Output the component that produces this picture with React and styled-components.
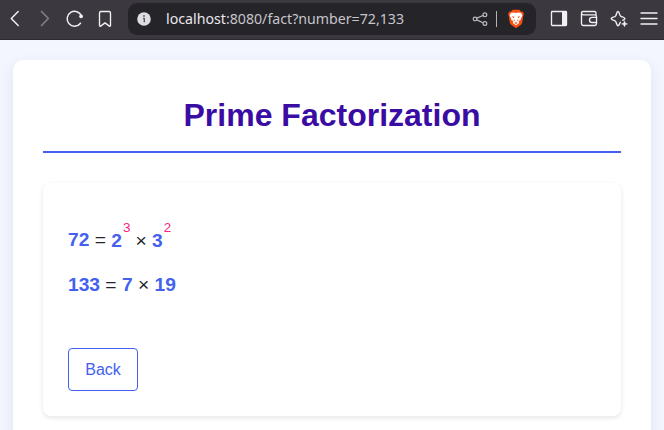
import React from "react";
import styled, { createGlobalStyle } from "styled-components";

const GlobalStyle = createGlobalStyle`
  * { box-sizing: border-box; }
  html, body { margin: 0; }
  body {
    background: #f3f6ff;
    color: #212529;
    font-family: "Liberation Sans", Arial, sans-serif;
    font-size: 16px;
    overflow: hidden;
  }
`;

const Window = styled.div`
  height: 430px;
  overflow: hidden;
  display: flex;
  flex-direction: column;
`;

const Toolbar = styled.header`
  display: flex;
  align-items: center;
  flex: 0 0 40px;
  background: #3b393f;
  border-bottom: 1px solid #2c2b30;
  padding: 0 5px 1px 5px;
`;

const NavGroup = styled.nav`
  display: flex;
  width: 123px;
  gap: 10px;
`;

const MenuGroup = styled.div`
  display: flex;
  gap: 10px;
  margin-left: 13px;
`;

const IconButton = styled.button`
  display: flex;
  width: 20px;
  height: 20px;
  padding: 0;
  border: 0;
  background: none;
  color: ${(p) => (p.$dim ? "#858387" : "#f1f0f2")};
`;

const Icon = styled.svg`
  display: block;
  flex: none;
  width: 20px;
  height: 20px;
  fill: none;
  stroke: currentColor;
  stroke-width: 1.35;
  stroke-linecap: round;
  stroke-linejoin: round;
`;

const AddressBar = styled.div`
  display: flex;
  align-items: center;
  flex: none;
  width: 408px;
  height: 32px;
  border-radius: 9px;
  background: #252429;
  color: #bcbabf;
  padding: 0 10px 0 6px;
`;

const Url = styled.span`
  flex: 1;
  margin-left: 12px;
  font: 14.18px/20px "Noto Sans", sans-serif;
  white-space: nowrap;
  color: #c7c6ca;
`;

const Host = styled.span`
  color: #e9e8ec;
`;

const Divider = styled.span`
  width: 1px;
  height: 16px;
  margin: 0 9px 0 6px;
  background: #b2b0b5;
`;

const Page = styled.main`
  flex: 1;
  padding: 20px 13px 0;
  min-height: 0;
`;

const Container = styled.section`
  height: 500px;
  padding: 30px;
  border-radius: 10px;
  background: #fff;
  box-shadow: 0 5px 15px rgba(0, 0, 0, 0.08);
`;

const Title = styled.h1`
  height: 63px;
  margin: 0 0 30px;
  padding-top: 6px;
  border-bottom: 2px solid #4361ee;
  color: #3a0ca3;
  font-size: 32px;
  line-height: 38px;
  text-align: center;
`;

const Result = styled.article`
  display: flex;
  flex-direction: column;
  height: 233px;
  padding: 25px;
  border-radius: 8px;
  background: #fff;
  box-shadow: 0 2px 5px rgba(0, 0, 0, 0.1);
`;

const Equations = styled.div`
  display: flex;
  flex-direction: column;
  gap: 14px;
  padding-top: 16px;
  height: 140px;
`;

const Equation = styled.div`
  height: 31px;
  font-size: 19.2px;
  line-height: 31px;
  white-space: pre;
`;

const Term = styled.strong`
  display: inline-block;
  position: relative;
  top: ${(p) => (p.$lowered ? "1px" : "0")};
  color: #4361ee;
`;

const Times = styled.span`
  display: inline-block;
  position: relative;
  top: ${(p) => (p.$afterPower ? "1px" : "0")};
  margin-left: ${(p) => (p.$afterPower ? "-0.3px" : "0")};
`;

const Power = styled.sup`
  display: inline-block;
  position: relative;
  top: -15px;
  margin-left: 1px;
  vertical-align: baseline;
  line-height: 0;
  font-size: 13.4px;
  font-weight: 400;
  color: #f72585;
`;

const BackButton = styled.button`
  width: 70px;
  height: 43px;
  padding: 0;
  border: 1px solid #4361ee;
  border-radius: 4px;
  background: #fff;
  color: #4361ee;
  font: 16px "Liberation Sans", Arial, sans-serif;
`;

function BrowserToolbar() {
  return (
    <Toolbar>
      <NavGroup>
        <IconButton aria-label="Previous page">
          <Icon viewBox="0 0 20 20"><path d="M13.2 2.5 6.3 9.5l6.9 7" strokeWidth="1.5" /></Icon>
        </IconButton>
        <IconButton $dim aria-label="Next page">
          <Icon viewBox="0 0 20 20"><path d="m6.5 2.5 6.9 7-6.9 7" strokeWidth="1.5" /></Icon>
        </IconButton>
        <IconButton aria-label="Reload">
          <Icon viewBox="0 0 20 20">
            <path d="M16.5 7.2A7.4 7.4 0 1 0 15.5 14.2" strokeWidth="1.5" />
            <circle cx="16.1" cy="7.3" r="1.9" fill="currentColor" stroke="none" />
          </Icon>
        </IconButton>
        <IconButton aria-label="Bookmark">
          <Icon viewBox="0 0 20 20"><path d="M4.5 4.2c0-1 .6-1.7 1.6-1.7h7.8c1 0 1.6.7 1.6 1.7v12.3c0 .7-.7 1-1.2.6L10 13.9l-4.3 3.2c-.5.4-1.2.1-1.2-.6Z" /></Icon>
        </IconButton>
      </NavGroup>
      <AddressBar>
        <Icon viewBox="0 0 20 20">
          <circle cx="10" cy="10" r="6.8" fill="#dedde1" stroke="none" />
          <path d="M9 9.3h1.3v4" stroke="#57555b" strokeLinecap="butt" />
          <circle cx="10" cy="6.9" r=".9" fill="#57555b" stroke="none" />
        </Icon>
        <Url><Host>localhost</Host>:8080/fact?number=72,133</Url>
        <Icon viewBox="0 0 20 20">
          <g strokeWidth="1.2">
            <circle cx="5" cy="10" r="1.8" />
            <circle cx="14.9" cy="5.7" r="1.9" />
            <circle cx="14.9" cy="14.5" r="1.9" />
            <path d="m6.8 9.1 6.2-2.6M6.8 10.9l6.2 2.8" />
          </g>
        </Icon>
        <Divider />
        <Icon viewBox="0 0 20 20">
          <path d="m6.8.8-1.5 1.5-2.4.6-.8 2.5.6 1.2 1 6.3c.3 1.5 1 2.5 2.1 3.3L10 19.3l4.2-3.1c1.1-.8 1.8-1.8 2.1-3.3l1-6.3.6-1.2-.8-2.5-2.4-.6L13.2.8Z" fill="#fb4f12" stroke="none" />
          <path d="m7.3 3.5-2.5.4-1.2 2.7 1.6 2.8-.1 1.4 2.2 1.2-.5 1.9 3.2 2.4 3.2-2.4-.5-1.9 2.2-1.2-.1-1.4 1.6-2.8-1.2-2.7-2.5-.4-2.7.6Z" fill="#fff" stroke="none" />
          <path d="m5.6 7.2 2.9.6-.7 1.4Zm8.8 0-2.9.6.7 1.4ZM8 10.3l-.5 1 1.8.9Zm4 0 .5 1-1.8.9ZM8.4 13.9l1.6-.8 1.6.8-1.6 1.1Z" fill="#fb4f12" stroke="none" />
        </Icon>
      </AddressBar>
      <MenuGroup>
        <IconButton aria-label="Sidebar">
          <Icon viewBox="0 0 20 20">
            <rect x="2.5" y="2.5" width="15" height="14" rx=".8" />
            <path d="M13 3h4.5v13H13Z" fill="currentColor" stroke="none" />
          </Icon>
        </IconButton>
        <IconButton aria-label="Wallet">
          <Icon viewBox="0 0 20 20">
            <path d="M17 6V4.2c0-1-.6-1.7-1.6-1.7H4.2c-1 0-1.7.7-1.7 1.6s.7 1.7 1.7 1.7h11.6c1 0 1.7.7 1.7 1.7v7.3c0 1-.7 1.7-1.7 1.7H4.2c-1 0-1.7-.7-1.7-1.7V4.1" />
            <path d="M17.5 8.3h-4.3c-1.6 0-2.7 1.1-2.7 2.6s1.1 2.6 2.7 2.6h4.3" />
          </Icon>
        </IconButton>
        <IconButton aria-label="Assistant">
          <Icon viewBox="0 0 20 20">
            <path d="M11.4 13.2c-1 1.5-1.3 3.5-2.4 3.5-1.5 0-1.3-3.2-2.5-4.5S2.2 11 2.2 9.6s3.1-1.2 4.3-2.5S7.5 2.5 9 2.5s1.2 3.3 2.5 4.6 4.4 1.1 4.4 2.5c0 .9-1 1.2-2.2 1.7" />
            <path d="m15.5 12 .8 2.1 2.1.8-2.1.8-.8 2.1-.8-2.1-2.1-.8 2.1-.8Z" fill="currentColor" strokeWidth=".5" />
          </Icon>
        </IconButton>
        <IconButton aria-label="Menu">
          <Icon viewBox="0 0 20 20"><path d="M2 4h16M2 9.5h16M2 15h16" /></Icon>
        </IconButton>
      </MenuGroup>
    </Toolbar>
  );
}

export default function App() {
  return (
    <>
      <GlobalStyle />
      <Window>
        <BrowserToolbar />
        <Page>
          <Container>
            <Title>Prime Factorization</Title>
            <Result>
              <Equations>
                <Equation>
                  <Term>72</Term> = <Term $lowered>2<Power>3</Power></Term> <Times $afterPower>×</Times> <Term $lowered>3<Power>2</Power></Term>
                </Equation>
                <Equation>
                  <Term>133</Term> = <Term>7</Term> <Times>×</Times> <Term>19</Term>
                </Equation>
              </Equations>
              <BackButton>Back</BackButton>
            </Result>
          </Container>
        </Page>
      </Window>
    </>
  );
}
